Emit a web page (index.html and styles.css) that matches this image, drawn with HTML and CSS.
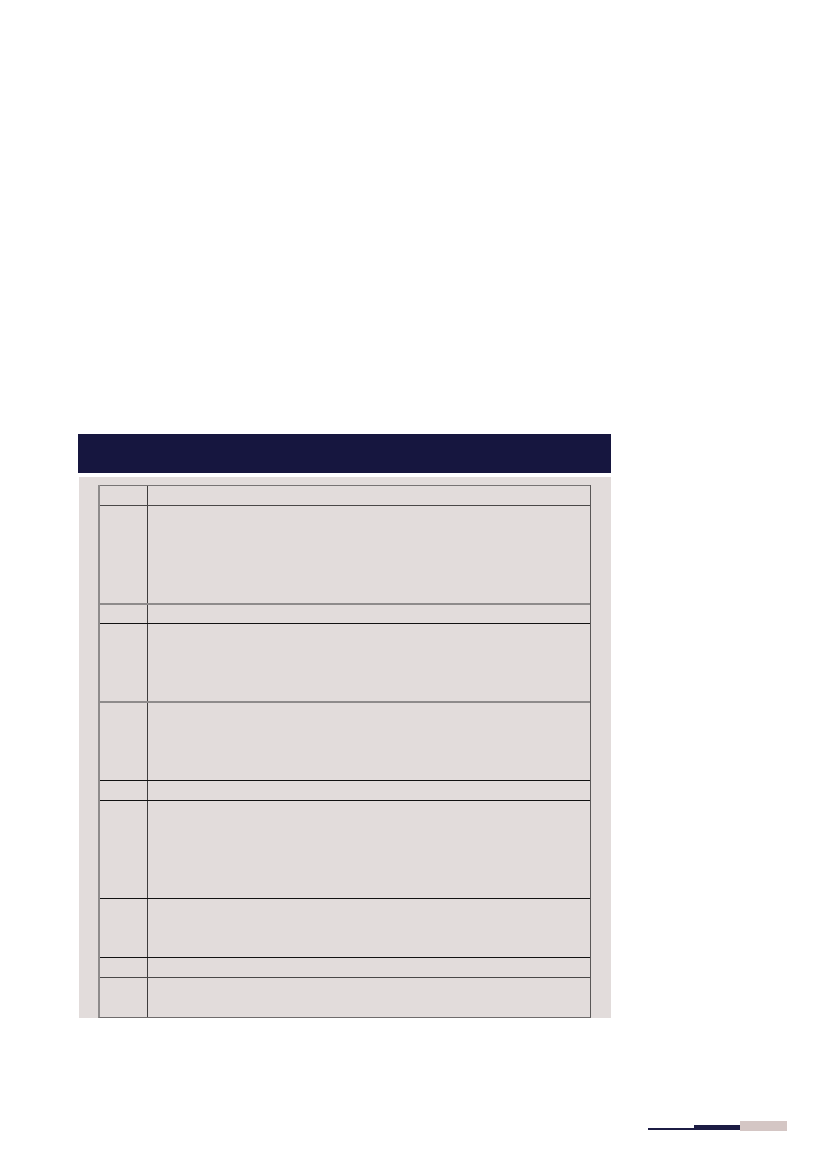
FILE: index.html
```html
<!DOCTYPE html>
<html lang="en">
<head>
<meta charset="utf-8">
<title>Page</title>
<link rel="stylesheet" href="styles.css">
</head>
<body>
<div class="page">
  <div class="header-bar"></div>
  <div class="panel">
    <div class="grid-table">
      <div class="row h20 b-gray"><div class="c1"></div><div class="c2"></div></div>
      <div class="row h98 b-dark"><div class="c1"></div><div class="c2"></div></div>
      <div class="row h20 b-light"><div class="c1"></div><div class="c2"></div></div>
      <div class="row h78 b-black"><div class="c1"></div><div class="c2"></div></div>
      <div class="row h79 b-light"><div class="c1"></div><div class="c2"></div></div>
      <div class="row h20 b-black"><div class="c1"></div><div class="c2"></div></div>
      <div class="row h98 b-black"><div class="c1"></div><div class="c2"></div></div>
      <div class="row h59 b-black"><div class="c1"></div><div class="c2"></div></div>
      <div class="row h20 b-black"><div class="c1"></div><div class="c2"></div></div>
      <div class="row h40 b-dark"><div class="c1"></div><div class="c2"></div></div>
    </div>
  </div>
  <div class="footer-mark">
    <span class="seg thin"></span>
    <span class="seg thick"></span>
    <span class="seg pink"></span>
  </div>
</div>
</body>
</html>
```

FILE: styles.css
```css
html, body {
  margin: 0;
  padding: 0;
  background: #ffffff;
  font-family: "Liberation Sans", Arial, sans-serif;
}

.page {
  width: 827px;
  height: 1169px;
  padding-top: 434px;
  box-sizing: border-box;
  overflow: hidden;
}

.header-bar {
  margin-left: 78px;
  width: 533px;
  height: 39px;
  background: #16163f;
}

.panel {
  margin-top: 4px;
  margin-left: 79px;
  width: 532px;
  padding: 8px 20px 0 19px;
  box-sizing: border-box;
  background: #e2dcdb;
}

.grid-table {
  display: flex;
  flex-direction: column;
  border-left: 2px solid #8e8b8b;
  border-right: 1px solid #5a5757;
  border-bottom: 1px solid #6f6c6c;
}

.row {
  display: flex;
  box-sizing: border-box;
  border-top: 1px solid #444;
}

.b-gray { border-top: 1px solid #777474; }
.b-dark { border-top: 1px solid #4a4848; }
.b-light { border-top: 2px solid #8e8b8b; }
.b-black { border-top: 1px solid #111; }

.h20 { height: 20px; }
.h40 { height: 40px; }
.h59 { height: 59px; }
.h78 { height: 78px; }
.h79 { height: 79px; }
.h98 { height: 98px; }

.c1 {
  width: 47px;
  flex: none;
  border-right: 1px solid #3e3c3c;
}

.c2 {
  flex: 1;
}

.footer-mark {
  display: flex;
  align-items: flex-end;
  margin-top: 103px;
  margin-left: 648px;
}

.seg {
  display: block;
}

.thin {
  width: 46px;
  height: 2px;
  margin-bottom: 1px;
  background: #1c1c44;
}

.thick {
  width: 46px;
  height: 5px;
  margin-bottom: 1px;
  background: #1c1c44;
}

.pink {
  width: 47px;
  height: 10px;
  background: #d4c6c4;
}
```
